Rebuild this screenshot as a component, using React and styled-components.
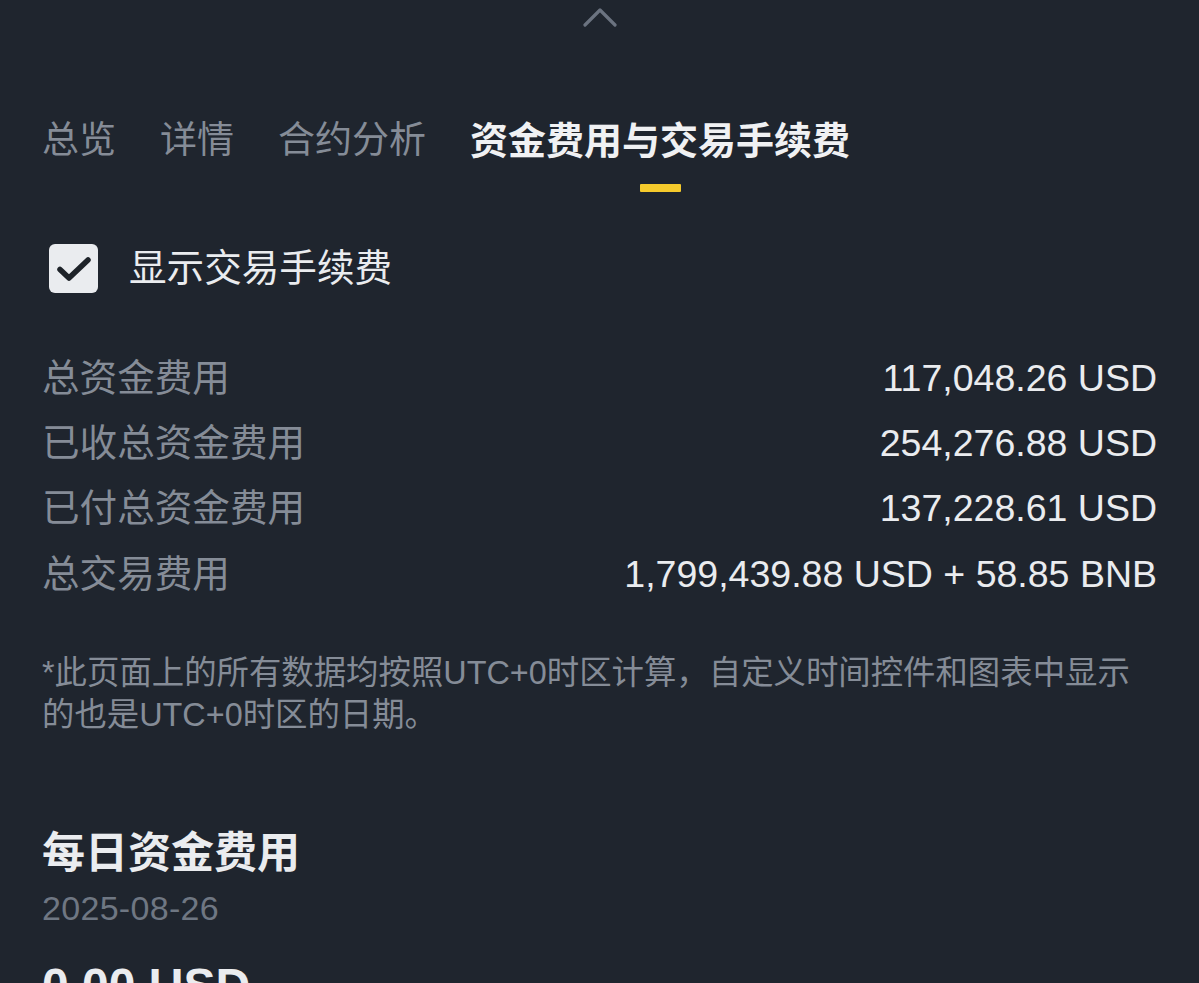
import styled, { createGlobalStyle } from "styled-components";

const GlobalStyle = createGlobalStyle`
  html, body {
    margin: 0;
    padding: 0;
    background: #1f252e;
  }
  body {
    font-family: "Liberation Sans", "Noto Sans CJK SC", sans-serif;
    color: #eaecef;
    overflow: hidden;
  }
`;

const rows = [
  { label: "总资金费用", value: "117,048.26 USD" },
  { label: "已收总资金费用", value: "254,276.88 USD" },
  { label: "已付总资金费用", value: "137,228.61 USD" },
  { label: "总交易费用", value: "1,799,439.88 USD + 58.85 BNB" },
];

const tabs = ["总览", "详情", "合约分析", "资金费用与交易手续费"];

const App = () => {
  return (
    <>
      <GlobalStyle />
      <Page>
        <Handle>
          <svg width="34" height="20" viewBox="0 0 34 20" fill="none">
            <path
              d="M2 18 L17 3 L32 18"
              stroke="#6b7380"
              strokeWidth="3.2"
              strokeLinecap="round"
              strokeLinejoin="round"
            />
          </svg>
        </Handle>

        <Tabs>
          {tabs.map((tab, i) => (
            <Tab key={tab}>
              <TabLabel active={i === 3}>{tab}</TabLabel>
              <Indicator active={i === 3} />
            </Tab>
          ))}
        </Tabs>

        <CheckRow>
          <CheckBox>
            <svg width="38" height="28" viewBox="0 0 38 28" fill="none">
              <path
                d="M5 14.5 L14 23 L33 5"
                stroke="#1e2329"
                strokeWidth="5.5"
                strokeLinecap="round"
                strokeLinejoin="round"
              />
            </svg>
          </CheckBox>
          <CheckLabel>显示交易手续费</CheckLabel>
        </CheckRow>

        <Summary>
          {rows.map((row) => (
            <Row key={row.label}>
              <RowLabel>{row.label}</RowLabel>
              <RowValue>{row.value}</RowValue>
            </Row>
          ))}
        </Summary>

        <Note>
          *此页面上的所有数据均按照UTC+0时区计算，自定义时间控件和图表中显示的也是UTC+0时区的日期。
        </Note>

        <SectionTitle>每日资金费用</SectionTitle>
        <DateText>2025-08-26</DateText>
        <Amount>0.00 USD</Amount>
      </Page>
    </>
  );
};

export default App;

const Page = styled.div`
  width: 1199px;
  height: 983px;
  box-sizing: border-box;
  padding: 0 42px;
  display: flex;
  flex-direction: column;
  overflow: hidden;
`;

const Handle = styled.div`
  height: 36px;
  display: flex;
  justify-content: center;
  align-items: flex-start;
  padding-top: 7px;
  box-sizing: border-box;
`;

const Tabs = styled.div`
  display: flex;
  gap: 44px;
  margin-top: 90px;
`;

const Tab = styled.div`
  display: flex;
  flex-direction: column;
  align-items: center;
`;

const TabLabel = styled.span`
  font-size: ${(props) => (props.active ? "38px" : "37px")};
  line-height: 48px;
  font-weight: ${(props) => (props.active ? 600 : 400)};
  color: ${(props) => (props.active ? "#f0f1f3" : "#858c97")};
  white-space: nowrap;
`;

const Indicator = styled.div`
  width: 41px;
  height: 8px;
  margin-top: 19px;
  border-radius: 1px;
  background: ${(props) => (props.active ? "#f5ca2c" : "transparent")};
`;

const CheckRow = styled.div`
  display: flex;
  align-items: center;
  gap: 31px;
  margin-top: 52px;
  padding-left: 7px;
`;

const CheckBox = styled.div`
  width: 49px;
  height: 49px;
  border-radius: 6px;
  background: #eaecef;
  display: flex;
  align-items: center;
  justify-content: center;
`;

const CheckLabel = styled.span`
  font-size: 37.6px;
  line-height: 49px;
  color: #eaecef;
`;

const Summary = styled.div`
  display: flex;
  flex-direction: column;
  margin-top: 52px;
`;

const Row = styled.div`
  display: flex;
  justify-content: space-between;
  align-items: center;
  height: 65.3px;
`;

const RowLabel = styled.span`
  font-size: 37.6px;
  line-height: 48px;
  color: #858c97;
`;

const RowValue = styled.span`
  font-size: 37.5px;
  line-height: 48px;
  color: #eaecef;
`;

const Note = styled.p`
  margin: 46px 0 0;
  font-size: 32.4px;
  line-height: 42px;
  color: #858c97;
`;

const SectionTitle = styled.h2`
  margin: 89px 0 0;
  font-size: 43px;
  line-height: 56px;
  font-weight: 600;
  color: #eaecef;
`;

const DateText = styled.div`
  margin-top: 7px;
  font-size: 34px;
  line-height: 40px;
  letter-spacing: 0.3px;
  color: #6f7783;
`;

const Amount = styled.div`
  margin-top: 29px;
  font-size: 48px;
  line-height: 58px;
  font-weight: 700;
  color: #eaecef;
`;
